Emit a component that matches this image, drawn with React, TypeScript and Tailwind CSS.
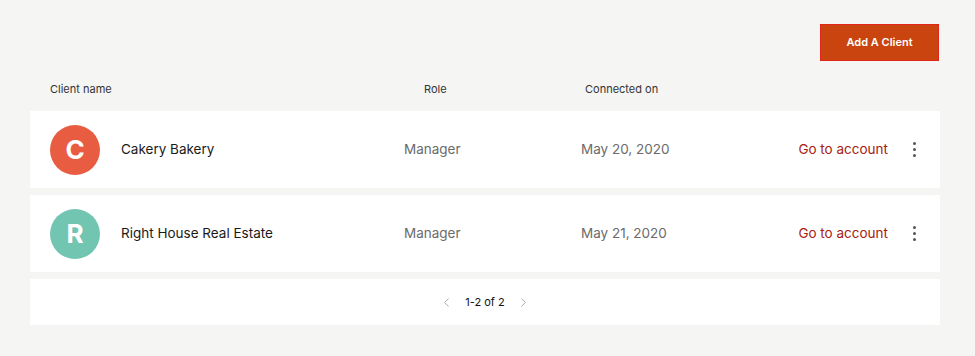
import { ChevronLeft, ChevronRight } from "lucide-react";

const clients = [
  { initial: "C", name: "Cakery Bakery", role: "Manager", date: "May 20, 2020", color: "bg-[#e85d42]" },
  { initial: "R", name: "Right House Real Estate", role: "Manager", date: "May 21, 2020", color: "bg-[#72c5b1]" },
];

export default function App() {
  return (
    <div className="min-h-[356px] bg-[#f5f5f3] pl-[30px] pr-[35px] pt-[24px] pb-[30px] font-['Inter',sans-serif] text-[#222]">
      {/* Top actions */}
      <div className="flex justify-end pr-px">
        <button className="h-[37px] w-[119px] border border-[#e3241b] bg-[#c9440e] text-[11px] font-semibold text-white">
          Add A Client
        </button>
      </div>

      {/* Column headers */}
      <div className="flex h-[50px] items-center pt-[6px] pl-[20px] text-[11px] text-[#333]">
        <div className="w-[374px]">Client name</div>
        <div className="w-[161px]">Role</div>
        <div>Connected on</div>
      </div>

      {/* Rows */}
      <div className="flex flex-col gap-[7px]">
        {clients.map((c) => (
          <ClientRow key={c.name} {...c} />
        ))}
      </div>

      {/* Pagination */}
      <div className="mt-[7px] flex h-[46px] items-center justify-center gap-[8px] bg-white">
        <ChevronLeft className="h-[15px] w-[15px] text-[#a5a5a5]" strokeWidth={1.5} />
        <span className="px-[3px] text-[11px] text-[#111]">1-2 of 2</span>
        <ChevronRight className="h-[15px] w-[15px] text-[#a5a5a5]" strokeWidth={1.5} />
      </div>
    </div>
  );
}

function ClientRow({
  initial,
  name,
  role,
  date,
  color,
}: {
  initial: string;
  name: string;
  role: string;
  date: string;
  color: string;
}) {
  return (
    <div className="flex h-[77px] items-center bg-white pl-[20px] pr-[24px] text-[13.5px]">
      <div className="flex w-[354px] items-center gap-[21px]">
        <div
          className={`flex h-[50px] w-[50px] items-center justify-center rounded-full ${color} text-[26px] font-bold text-white`}
        >
          {initial}
        </div>
        <span className="text-[#1a1a1a]">{name}</span>
      </div>
      <div className="w-[177px] text-[#6b6b6b]">{role}</div>
      <div className="text-[#6b6b6b]">{date}</div>
      <a className="ml-auto text-[#a82110]">Go to account</a>
      <div className="ml-[25px] flex flex-col gap-[3px]">
        <span className="h-[3px] w-[3px] rounded-full bg-[#555]" />
        <span className="h-[3px] w-[3px] rounded-full bg-[#555]" />
        <span className="h-[3px] w-[3px] rounded-full bg-[#555]" />
      </div>
    </div>
  );
}
